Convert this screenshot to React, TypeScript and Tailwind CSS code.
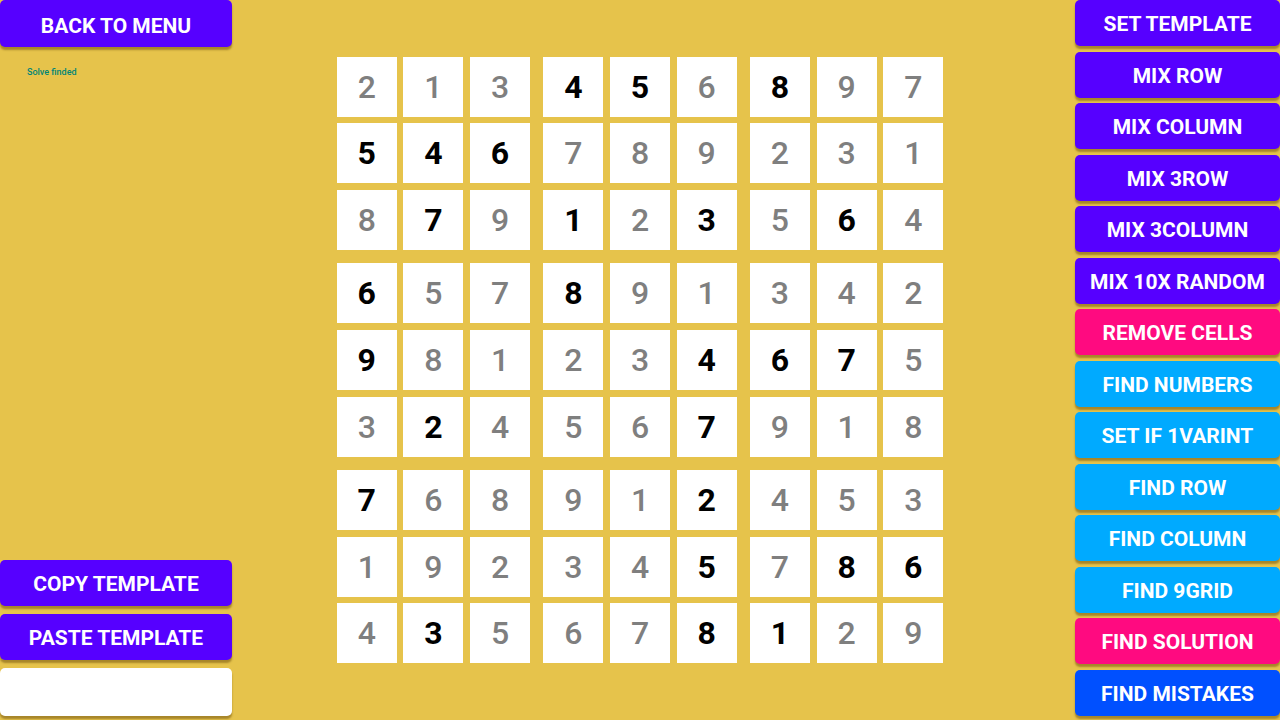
const FONT = { fontFamily: "Roboto, 'Noto Sans', sans-serif" };

// b = bold/black given digit, g = grey solved digit
const BOARD = [
  "2g 1g 3g 4b 5b 6g 8b 9g 7g",
  "5b 4b 6b 7g 8g 9g 2g 3g 1g",
  "8g 7b 9g 1b 2g 3b 5g 6b 4g",
  "6b 5g 7g 8b 9g 1g 3g 4g 2g",
  "9b 8g 1g 2g 3g 4b 6b 7b 5g",
  "3g 2b 4g 5g 6g 7b 9g 1g 8g",
  "7b 6g 8g 9g 1g 2b 4g 5g 3g",
  "1g 9g 2g 3g 4g 5b 7g 8b 6b",
  "4g 3b 5g 6g 7g 8b 1b 2g 9g",
].map((r) => r.split(" "));

const RIGHT: { label: string; color: string }[] = [
  { label: "SET TEMPLATE", color: "bg-[#5600ff]" },
  { label: "MIX ROW", color: "bg-[#5600ff]" },
  { label: "MIX COLUMN", color: "bg-[#5600ff]" },
  { label: "MIX 3ROW", color: "bg-[#5600ff]" },
  { label: "MIX 3COLUMN", color: "bg-[#5600ff]" },
  { label: "MIX 10X RANDOM", color: "bg-[#5600ff]" },
  { label: "REMOVE CELLS", color: "bg-[#ff0a80]" },
  { label: "FIND NUMBERS", color: "bg-[#00aaff]" },
  { label: "SET IF 1VARINT", color: "bg-[#00aaff]" },
  { label: "FIND ROW", color: "bg-[#00aaff]" },
  { label: "FIND COLUMN", color: "bg-[#00aaff]" },
  { label: "FIND 9GRID", color: "bg-[#00aaff]" },
  { label: "FIND SOLUTION", color: "bg-[#ff0a80]" },
  { label: "FIND MISTAKES", color: "bg-[#0050ff]" },
];

function Btn({ label, color, className = "" }: { label: string; color: string; className?: string }) {
  return (
    <button
      className={`flex h-[46px] items-center justify-center rounded-[5px] pt-[4px] text-[21px] font-bold text-white shadow-[0_3px_2px_rgba(90,60,0,0.45)] ${color} ${className}`}
    >
      {label}
    </button>
  );
}

function Cell({ v }: { v: string }) {
  const bold = v[1] === "b";
  return (
    <div
      className={`flex h-[60px] w-[60px] items-center justify-center bg-white text-[32px] ${
        bold ? "font-bold text-black" : "font-medium text-[#7f7f7f]"
      }`}
    >
      {v[0]}
    </div>
  );
}

export default function App() {
  return (
    <div className="grid h-[720px] w-[1280px] grid-cols-[1fr_auto_1fr] overflow-hidden bg-[#e6c34b]" style={FONT}>
      <div className="flex h-[720px] flex-col justify-between pb-[4px]">
        <div>
          <Btn label="BACK TO MENU" color="bg-[#5600ff]" className="h-[47px] w-[232px] pt-[6px]" />
          <div className="ml-[27px] mt-[21px] text-[9px] font-medium leading-none text-[#008577]">Solve finded</div>
        </div>
        <div className="flex w-[232px] flex-col gap-[8px]">
          <Btn label="COPY TEMPLATE" color="bg-[#5600ff]" />
          <Btn label="PASTE TEMPLATE" color="bg-[#5600ff]" />
          <div className="h-[48px] rounded-[5px] bg-white shadow-[0_3px_2px_rgba(90,60,0,0.45)]" />
        </div>
      </div>

      <div className="flex items-center">
        <div className="grid grid-cols-3 gap-[13.3px]">
          {[0, 1, 2].map((br) =>
            [0, 1, 2].map((bc) => (
              <div key={`${br}-${bc}`} className="grid grid-cols-3 gap-[6.67px]">
                {[0, 1, 2].map((r) =>
                  [0, 1, 2].map((c) => <Cell key={`${r}-${c}`} v={BOARD[br * 3 + r][bc * 3 + c]} />)
                )}
              </div>
            ))
          )}
        </div>
      </div>

      <div className="flex justify-end">
        <div className="flex w-[205px] flex-col gap-[5.5px]">
          {RIGHT.map((b) => (
            <Btn key={b.label} label={b.label} color={b.color} />
          ))}
        </div>
      </div>
    </div>
  );
}
